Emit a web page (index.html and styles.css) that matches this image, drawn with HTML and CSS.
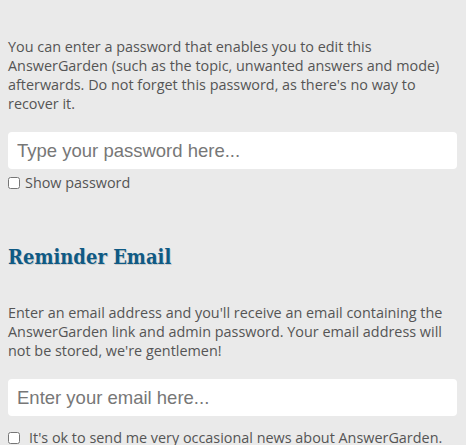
FILE: index.html
```html
<!DOCTYPE html>
<html lang="en">
<head>
  <meta charset="UTF-8">
  <title>AnswerGarden - Admin password</title>
  <link rel="stylesheet" href="styles.css">
</head>
<body>
  <div class="panel">
    <!-- Admin password -->
    <p class="info first">You can enter a password that enables you to edit this AnswerGarden (such as the topic, unwanted answers and mode) afterwards. Do not forget this password, as there's no way to recover it.</p>
    <input class="field" type="password" placeholder="Type your password here...">
    <label class="check"><input type="checkbox"> Show password</label>

    <!-- Reminder email -->
    <h2 class="title">Reminder Email</h2>
    <p class="info">Enter an email address and you'll receive an email containing the AnswerGarden link and admin password. Your email address will not be stored, we're gentlemen!</p>
    <input class="field" type="email" placeholder="Enter your email here...">
    <label class="check news"><input type="checkbox"> It's ok to send me very occasional news about AnswerGarden.</label>
  </div>
</body>
</html>
```

FILE: styles.css
```css
body {
  margin: 0;
  background-color: #eaeaea;
  font-family: 'Open Sans', sans-serif;
  color: #555;
}

.panel {
  padding: 0 9px 0 8px;
}

.info {
  margin: 0 0 19px;
  font-size: 14.4px;
  line-height: 19px;
}

.info.first {
  padding-top: 37px;
}

.field {
  display: block;
  box-sizing: border-box;
  width: 100%;
  height: 37px;
  padding: 0 9px;
  border: none;
  border-radius: 4px;
  background: white;
  font-family: 'Liberation Sans', Arial, sans-serif;
  font-size: 18.5px;
  color: #555;
}

.field::placeholder {
  color: #777;
}

.check {
  display: flex;
  align-items: center;
  margin-top: 4px;
  font-size: 14.4px;
  line-height: 20px;
}

.check input {
  width: 12px;
  height: 12px;
  margin: 0 5px 0 0;
}

.check.news {
  margin-top: 12px;
}

.check.news input {
  margin-right: 9px;
}

.title {
  margin: 52px 0 34px;
  font-family: 'DejaVu Serif Condensed', 'DejaVu Serif', serif;
  font-size: 20px;
  line-height: 24px;
  font-weight: bold;
  color: #0f5a84;
  text-shadow: 1px 1px 0 rgba(0, 0, 0, 0.15);
}
```
